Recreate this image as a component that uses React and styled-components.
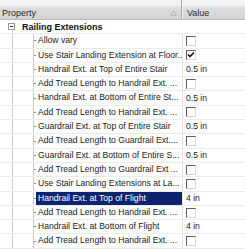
import styled, { createGlobalStyle } from "styled-components";

const GlobalStyle = createGlobalStyle`
  html, body {
    margin: 0;
    padding: 0;
    background: #fff;
  }
  body {
    font-family: "Liberation Sans", Arial, sans-serif;
    font-size: 8.6px;
    color: #1c1c1c;
  }
`;

const Grid = styled.div`
  width: 245px;
  height: 250px;
  overflow: hidden;
  background: #fff;
`;

const Header = styled.div`
  display: grid;
  grid-template-columns: 182px 1fr;
  height: 20px;
  box-sizing: border-box;
  border-bottom: 1px solid #b9b9b9;
  background: linear-gradient(#f6f6f6 0, #f1f1f1 6px, #dedede 7px, #d3d3d3 100%);
  font-size: 9px;
`;

const HeaderCell = styled.div`
  display: flex;
  align-items: center;
  justify-content: space-between;
  padding: 6px 4px 0 ${(p) => p.$pad}px;
  border-right: ${(p) => (p.$divider ? "1px solid #a9a9a9" : "none")};
  box-shadow: ${(p) => (p.$divider ? "1px 0 0 #f4f4f4" : "none")};
  color: #2a2a2a;
`;

const Row = styled.div`
  display: grid;
  grid-template-columns: 36px 146px 1fr;
  height: 14.3px;
  box-sizing: border-box;
  border-bottom: 1px solid #ececec;
  line-height: 13px;
`;

const Gutter = styled.div`
  background:
    linear-gradient(#cbcbcb, #cbcbcb) 12px 0 / 1px 100% no-repeat,
    linear-gradient(#cbcbcb, #cbcbcb) 33px 0 / 1px 100% no-repeat,
    linear-gradient(#8a8a8a, #8a8a8a) 33px 50% / 4px 1px no-repeat;
`;

const CategoryRow = styled.div`
  display: flex;
  align-items: center;
  height: 14.3px;
  box-sizing: border-box;
  border-bottom: 1px solid #ececec;
  background: linear-gradient(#cbcbcb, #cbcbcb) 12px 10px / 1px 100% no-repeat;
  font-size: 9px;
`;

const Expander = styled.div`
  width: 7px;
  height: 7px;
  margin: 0 7px 0 8px;
  box-sizing: border-box;
  border: 1px solid #9a9a9a;
  background: #fff;
  display: flex;
  align-items: center;
  justify-content: center;
  &::after {
    content: "";
    width: 3px;
    height: 1px;
    background: #333;
  }
`;

const CategoryTitle = styled.span`
  font-weight: bold;
  color: #111;
`;

const Label = styled.div`
  white-space: nowrap;
  overflow: hidden;
  padding-left: 2px;
  background: ${(p) => (p.$selected ? "#0c2370" : "transparent")};
  color: ${(p) => (p.$selected ? "#fff" : "#1c1c1c")};
`;

const ValueCell = styled.div`
  display: flex;
  align-items: center;
  padding-left: 3px;
  border-left: 1px solid #e2e2e2;
  white-space: nowrap;
`;

const Check = styled.div`
  width: 10px;
  height: 10px;
  box-sizing: border-box;
  border-top: 1px solid #5e5e5e;
  border-left: 1px solid #5e5e5e;
  border-right: 1px solid #d9d9d9;
  border-bottom: 1px solid #d9d9d9;
  background: #fff;
  display: flex;
  align-items: center;
  justify-content: center;
`;

const rows = [
  { label: "Allow vary", check: false },
  { label: "Use Stair Landing Extension at Floor..", check: true },
  { label: "Handrail Ext. at Top of Entire Stair", value: "0.5 in" },
  { label: "Add Tread Length to Handrail Ext. ...", check: false },
  { label: "Handrail Ext. at Bottom of Entire St...", value: "0.5 in" },
  { label: "Add Tread Length to Handrail Ext. ...", check: false },
  { label: "Guardrail Ext. at Top of Entire Stair", value: "0.5 in" },
  { label: "Add Tread Length to Guardrail Ext....", check: false },
  { label: "Guardrail Ext. at Bottom of Entire S...", value: "0.5 in" },
  { label: "Add Tread Length to Guardrail Ext ...", check: false },
  { label: "Use Stair Landing Extensions at La...", check: false },
  { label: "Handrail Ext. at Top of Flight", value: "4 in", selected: true },
  { label: "Add Tread Length to Handrail Ext. ...", check: false },
  { label: "Handrail Ext. at Bottom of Flight", value: "4 in" },
  { label: "Add Tread Length to Handrail Ext. ...", check: false },
];

const SortArrow = () => (
  <svg width="7" height="6" viewBox="0 0 7 6">
    <path d="M3.5 0.5 L6.5 5.5 L0.5 5.5 Z" fill="none" stroke="#b4b4b4" strokeWidth="1" />
  </svg>
);

const Tick = () => (
  <svg width="8" height="8" viewBox="0 0 8 8">
    <path d="M1 3.5 L3 5.5 L7 1.5" fill="none" stroke="#111" strokeWidth="1.6" />
  </svg>
);

const App = () => {
  return (
    <Grid>
      <GlobalStyle />
      <Header>
        <HeaderCell $pad={2} $divider>
          <span>Property</span>
          <SortArrow />
        </HeaderCell>
        <HeaderCell $pad={5}>Value</HeaderCell>
      </Header>
      <CategoryRow>
        <Expander />
        <CategoryTitle>Railing Extensions</CategoryTitle>
      </CategoryRow>
      {rows.map((r, i) => (
        <Row key={i}>
          <Gutter />
          <Label $selected={r.selected}>{r.label}</Label>
          <ValueCell>
            {r.value ? r.value : <Check>{r.check && <Tick />}</Check>}
          </ValueCell>
        </Row>
      ))}
    </Grid>
  );
};

export default App;
